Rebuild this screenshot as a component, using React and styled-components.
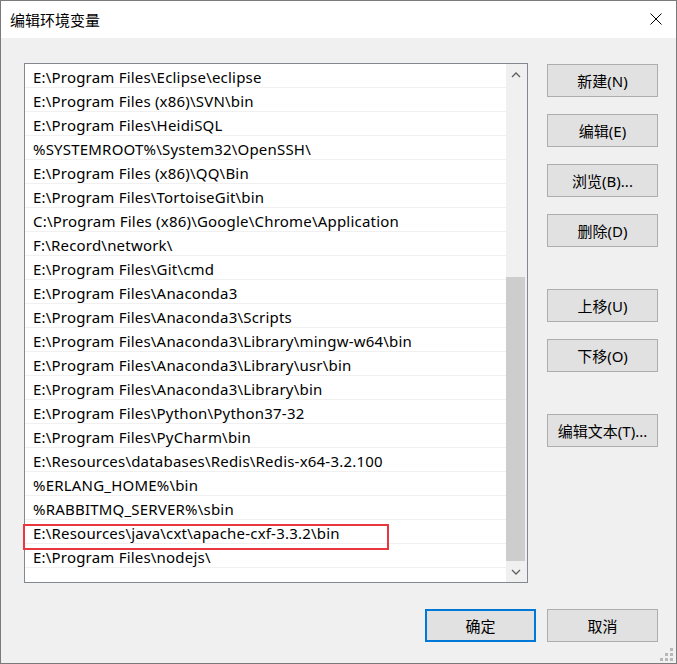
import React from 'react';
import styled, { createGlobalStyle } from 'styled-components';

const GlobalStyle = createGlobalStyle`
  html, body {
    margin: 0;
    padding: 0;
    background: #f0f0f0;
  }
  * {
    box-sizing: border-box;
  }
`;

const Window = styled.div`
  width: 677px;
  height: 664px;
  border: 1px solid #7a7a7a;
  background: #f0f0f0;
  display: flex;
  flex-direction: column;
  font-family: "Noto Sans", "Noto Sans CJK SC", sans-serif;
  color: #000;
  position: relative;
`;

const TitleBar = styled.div`
  height: 37px;
  background: #fff;
  display: flex;
  align-items: center;
  justify-content: space-between;
  padding: 0 14px 0 9px;
`;

const Title = styled.span`
  font-size: 15px;
  font-family: "Noto Sans CJK SC", sans-serif;
  padding-bottom: 1px;
`;

const CloseIcon = styled.svg`
  width: 12px;
  height: 12px;
  margin-bottom: 1px;
`;

const Body = styled.div`
  flex: 1;
  display: flex;
  flex-direction: column;
  padding: 25px 18px 21px 23px;
`;

const MainRow = styled.div`
  display: flex;
  gap: 19px;
`;

const ListBox = styled.div`
  width: 504px;
  height: 520px;
  border: 1px solid #828790;
  background: #fff;
  display: flex;
`;

const Rows = styled.div`
  flex: 1;
  display: flex;
  flex-direction: column;
`;

const Row = styled.div`
  position: relative;
  height: 24px;
  line-height: 23px;
  padding: 2px 0 0 8px;
  font-size: 15px;
  letter-spacing: 0.2px;
  border-bottom: 1px solid #f0f0f0;
  white-space: nowrap;

  ${({ $marked }) => $marked && `
    &::after {
      content: "";
      position: absolute;
      left: -2px;
      top: 4px;
      width: 362px;
      height: 22px;
      border: 2px solid #e8373e;
      z-index: 2;
    }
  `}
`;

const ScrollBar = styled.div`
  width: 21px;
  background: #f0f0f0;
  display: flex;
  flex-direction: column;
`;

const ArrowButton = styled.div`
  height: 21px;
  display: flex;
  align-items: center;
  justify-content: center;
  padding-right: 1px;
`;

const Track = styled.div`
  flex: 1;
  display: flex;
  flex-direction: column;
  justify-content: flex-end;
`;

const Thumb = styled.div`
  height: 284px;
  width: 19px;
  background: #cdcdcd;
`;

const ButtonColumn = styled.div`
  display: flex;
  flex-direction: column;
  width: 111px;
  padding-top: 1px;
`;

const Button = styled.button`
  width: 111px;
  height: 33px;
  flex-shrink: 0;
  background: #e1e1e1;
  border: ${({ $primary }) => ($primary ? '2px solid #0078d7' : '1px solid #adadad')};
  font-family: "Noto Sans", "Noto Sans CJK SC", sans-serif;
  font-size: 15px;
  color: #000;
  padding: 0 0 1px;
  margin-top: ${({ $gap }) => $gap || 0}px;
`;

const Footer = styled.div`
  display: flex;
  justify-content: flex-end;
  gap: 11px;
  margin-top: 26px;
`;

const Grip = styled.svg`
  position: absolute;
  right: 2px;
  bottom: 1px;
  width: 14px;
  height: 14px;
`;

const paths = [
  'E:\\Program Files\\Eclipse\\eclipse',
  'E:\\Program Files (x86)\\SVN\\bin',
  'E:\\Program Files\\HeidiSQL',
  '%SYSTEMROOT%\\System32\\OpenSSH\\',
  'E:\\Program Files (x86)\\QQ\\Bin',
  'E:\\Program Files\\TortoiseGit\\bin',
  'C:\\Program Files (x86)\\Google\\Chrome\\Application',
  'F:\\Record\\network\\',
  'E:\\Program Files\\Git\\cmd',
  'E:\\Program Files\\Anaconda3',
  'E:\\Program Files\\Anaconda3\\Scripts',
  'E:\\Program Files\\Anaconda3\\Library\\mingw-w64\\bin',
  'E:\\Program Files\\Anaconda3\\Library\\usr\\bin',
  'E:\\Program Files\\Anaconda3\\Library\\bin',
  'E:\\Program Files\\Python\\Python37-32',
  'E:\\Program Files\\PyCharm\\bin',
  'E:\\Resources\\databases\\Redis\\Redis-x64-3.2.100',
  '%ERLANG_HOME%\\bin',
  '%RABBITMQ_SERVER%\\sbin',
  'E:\\Resources\\java\\cxt\\apache-cxf-3.3.2\\bin',
  'E:\\Program Files\\nodejs\\',
];

const sideButtons = [
  { label: '新建(N)', gap: 0 },
  { label: '编辑(E)', gap: 17 },
  { label: '浏览(B)...', gap: 17 },
  { label: '删除(D)', gap: 17 },
  { label: '上移(U)', gap: 42 },
  { label: '下移(O)', gap: 17 },
  { label: '编辑文本(T)...', gap: 42 },
];

const Chevron = ({ down }) => (
  <svg width="10" height="6" viewBox="0 0 10 6">
    <path
      d={down ? 'M1 1 L5 5 L9 1' : 'M1 5 L5 1 L9 5'}
      fill="none"
      stroke="#606060"
      strokeWidth="1.3"
    />
  </svg>
);

export default function App() {
  return (
    <>
      <GlobalStyle />
      <Window>
        <TitleBar>
          <Title>编辑环境变量</Title>
          <CloseIcon viewBox="0 0 12 12">
            <path d="M0.5 0.5 L11.5 11.5 M11.5 0.5 L0.5 11.5" stroke="#000" strokeWidth="1" />
          </CloseIcon>
        </TitleBar>
        <Body>
          <MainRow>
            <ListBox>
              <Rows>
                {paths.map((p, i) => (
                  <Row key={i} $marked={i === 19}>{p}</Row>
                ))}
              </Rows>
              <ScrollBar>
                <ArrowButton><Chevron /></ArrowButton>
                <Track>
                  <Thumb />
                </Track>
                <ArrowButton><Chevron down /></ArrowButton>
              </ScrollBar>
            </ListBox>
            <ButtonColumn>
              {sideButtons.map((b) => (
                <Button key={b.label} $gap={b.gap}>{b.label}</Button>
              ))}
            </ButtonColumn>
          </MainRow>
          <Footer>
            <Button $primary>确定</Button>
            <Button>取消</Button>
          </Footer>
        </Body>
        <Grip viewBox="0 0 14 14">
          <g fill="#b8b8b8">
            <rect x="10" y="0" width="3" height="3" />
            <rect x="5" y="5" width="3" height="3" />
            <rect x="10" y="5" width="3" height="3" />
            <rect x="0" y="10" width="3" height="3" />
            <rect x="5" y="10" width="3" height="3" />
            <rect x="10" y="10" width="3" height="3" />
          </g>
        </Grip>
      </Window>
    </>
  );
}
